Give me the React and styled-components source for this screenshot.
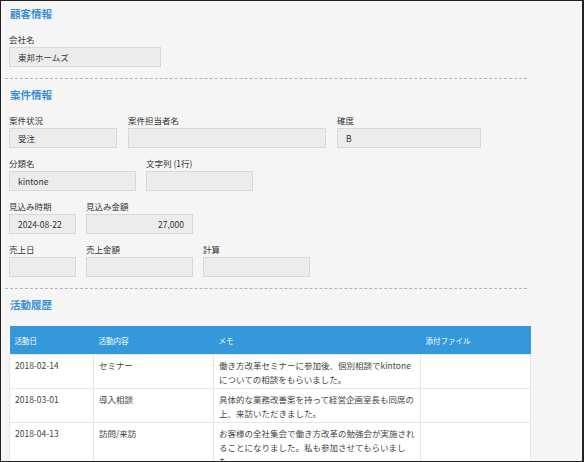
import React from "react";
import styled, { createGlobalStyle } from "styled-components";

const Global = createGlobalStyle`
  html, body { margin: 0; padding: 0; background: #fff; }
  body { font-family: "Noto Sans CJK JP", "Noto Sans", sans-serif; color: #333; }
`;

const Frame = styled.div`
  width: 584px;
  height: 462px;
  box-sizing: border-box;
  border: 1px solid #222;
  border-right-width: 2px;
  background: #f5f5f5;
  overflow: hidden;
  padding: 0 0 0 8px;
`;

const Title = styled.h2`
  margin: 0;
  padding: 5px 0 0 1px;
  height: 22px;
  font-size: 10.5px;
  font-weight: bold;
  color: #3a8fd6;
`;

const Divider = styled.hr`
  margin: 11px 0 3px -4px;
  width: 522px;
  border: 0;
  border-top: 1px dashed #b5b5b5;
`;

const Row = styled.div`
  display: flex;
  margin-top: ${(p) => p.top || 0}px;
`;

const Field = styled.div`
  width: ${(p) => p.w}px;
  margin-right: ${(p) => p.gap ?? 10}px;
`;

const Label = styled.div`
  font-size: 8.5px;
  height: 14px;
  line-height: 14px;
  color: #333;
`;

const Box = styled.div`
  box-sizing: border-box;
  height: 20px;
  margin-top: 1px;
  border: 1px solid #d8d8d8;
  background: #ececec;
  font-size: 8.5px;
  line-height: 18px;
  padding: 0 8px;
  text-align: ${(p) => (p.right ? "right" : "left")};
`;

const Table = styled.table`
  margin-top: 7px;
  width: 522px;
  border-collapse: collapse;
  font-size: 8.5px;
  background: #fff;
`;

const Th = styled.th`
  background: #3498db;
  color: #fff;
  font-weight: normal;
  font-size: 7.5px;
  text-align: left;
  height: 28px;
  padding: 0 5px;
  width: ${(p) => p.w}px;
`;

const Td = styled.td`
  border: 1px solid #e6e6e6;
  vertical-align: top;
  padding: 3px 5px 2px;
  line-height: 14px;
  color: #444;
`;

const rows = [
  ["2018-02-14", "セミナー", "働き方改革セミナーに参加後、個別相談でkintoneについての相談をもらいました。"],
  ["2018-03-01", "導入相談", "具体的な業務改善案を持って経営企画室長も同席の上、来訪いただきました。"],
  ["2018-04-13", "訪問/来訪", "お客様の全社集会で働き方改革の勉強会が実施されることになりました。私も参加させてもらいました。"],
];

export default function App() {
  return (
    <Frame>
      <Global />
      <Title>顧客情報</Title>
      <Row top={4}>
        <Field w={152}>
          <Label>会社名</Label>
          <Box>東邦ホームズ</Box>
        </Field>
      </Row>
      <Divider />
      <Title>案件情報</Title>
      <Row top={4}>
        <Field w={108} gap={11}><Label>案件状況</Label><Box>受注</Box></Field>
        <Field w={198} gap={11}><Label>案件担当者名</Label><Box /></Field>
        <Field w={144}><Label>確度</Label><Box>B</Box></Field>
      </Row>
      <Row top={8}>
        <Field w={127}><Label>分類名</Label><Box>kintone</Box></Field>
        <Field w={107}><Label>文字列 (1行)</Label><Box /></Field>
      </Row>
      <Row top={8}>
        <Field w={67}><Label>見込み時期</Label><Box>2024-08-22</Box></Field>
        <Field w={107}><Label>見込み金額</Label><Box right>27,000</Box></Field>
      </Row>
      <Row top={8}>
        <Field w={67}><Label>売上日</Label><Box /></Field>
        <Field w={107}><Label>売上金額</Label><Box /></Field>
        <Field w={107}><Label>計算</Label><Box /></Field>
      </Row>
      <Divider />
      <Title>活動履歴</Title>
      <Table>
        <thead>
          <tr>
            <Th w={74}>活動日</Th>
            <Th w={110}>活動内容</Th>
            <Th w={197}>メモ</Th>
            <Th>添付ファイル</Th>
          </tr>
        </thead>
        <tbody>
          {rows.map((r) => (
            <tr key={r[0]}>
              <Td>{r[0]}</Td>
              <Td>{r[1]}</Td>
              <Td>{r[2]}</Td>
              <Td />
            </tr>
          ))}
        </tbody>
      </Table>
    </Frame>
  );
}
